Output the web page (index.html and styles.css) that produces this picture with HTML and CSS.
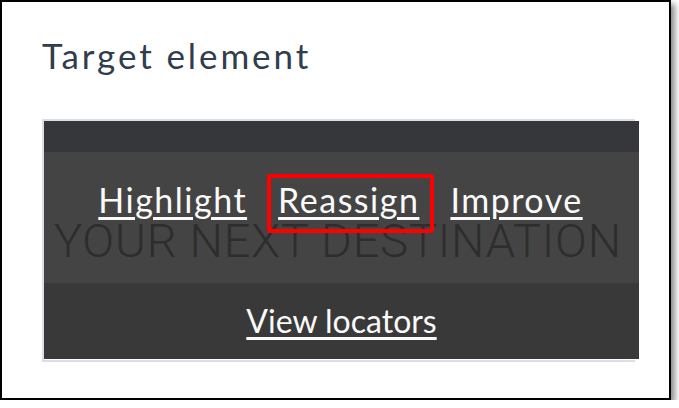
FILE: index.html
```html
<!DOCTYPE html>
<html>
<head>
<meta charset="utf-8">
<link rel="stylesheet" href="styles.css">
</head>
<body>
<div class="window">
  <h1 class="title">Target element</h1>
  <div class="frame">
    <div class="shot">
      <div class="strip"></div>
      <div class="hero">
        <div class="hero-text">YOUR NEXT DESTINATION</div>
        <div class="actions">
          <a class="link big">Highlight</a>
          <a class="link big selected">Reassign</a>
          <a class="link big">Improve</a>
        </div>
      </div>
      <div class="footer">
        <a class="link">View locators</a>
      </div>
    </div>
  </div>
</div>
</body>
</html>
```
FILE: styles.css
```css
html, body {
  margin: 0;
  padding: 0;
  background: #fff;
}
.window {
  box-sizing: border-box;
  width: 671px;
  height: 400px;
  border: 2px solid #000;
  background: #fff;
  box-shadow: 4px 4px 6px rgba(0,0,0,0.45);
  padding: 33px 0 0 40px;
}
.title {
  margin: 0;
  font-family: Lato, "Open Sans", sans-serif;
  font-weight: 400;
  font-size: 35px;
  letter-spacing: 2.9px;
  line-height: 40px;
  color: #2f3d4d;
}
.frame {
  margin-top: 44px;
  box-sizing: border-box;
  width: 593px;
  height: 243px;
  border: 2px solid #dcdde6;
  border-right: 0;
}
.shot {
  width: 595px;
  height: 238px;
  display: flex;
  flex-direction: column;
}
.strip {
  height: 31px;
  background: #36373b;
}
.hero {
  position: relative;
  height: 131px;
  background: #444444;
}
.hero-text {
  padding-top: 64px;
  padding-right: 7px;
  text-align: center;
  font-family: Roboto, sans-serif;
  font-weight: 300;
  font-size: 47px;
  line-height: 50px;
  color: #2d2d2d;
  letter-spacing: 0.8px;
  white-space: nowrap;
}
.actions {
  position: absolute;
  left: 0;
  right: 0;
  top: 26px;
  display: flex;
  justify-content: center;
  gap: 31px;
  padding-right: 2px;
}
.link {
  font-family: Lato, sans-serif;
  font-size: 32px;
  line-height: 44px;
  color: #fafafa;
  text-decoration: underline;
  text-decoration-thickness: 3px;
  text-underline-offset: 4px;
}
.big {
  font-size: 34px;
  letter-spacing: 1.5px;
}
.selected {
  position: relative;
}
.selected::after {
  content: "";
  position: absolute;
  left: -11px;
  right: -15px;
  top: -4px;
  bottom: -11px;
  border: 4px solid #ff0000;
  border-radius: 3px;
}
.footer {
  flex: 1;
  background: #393939;
  display: flex;
  justify-content: center;
  padding-top: 16px;
}
```
